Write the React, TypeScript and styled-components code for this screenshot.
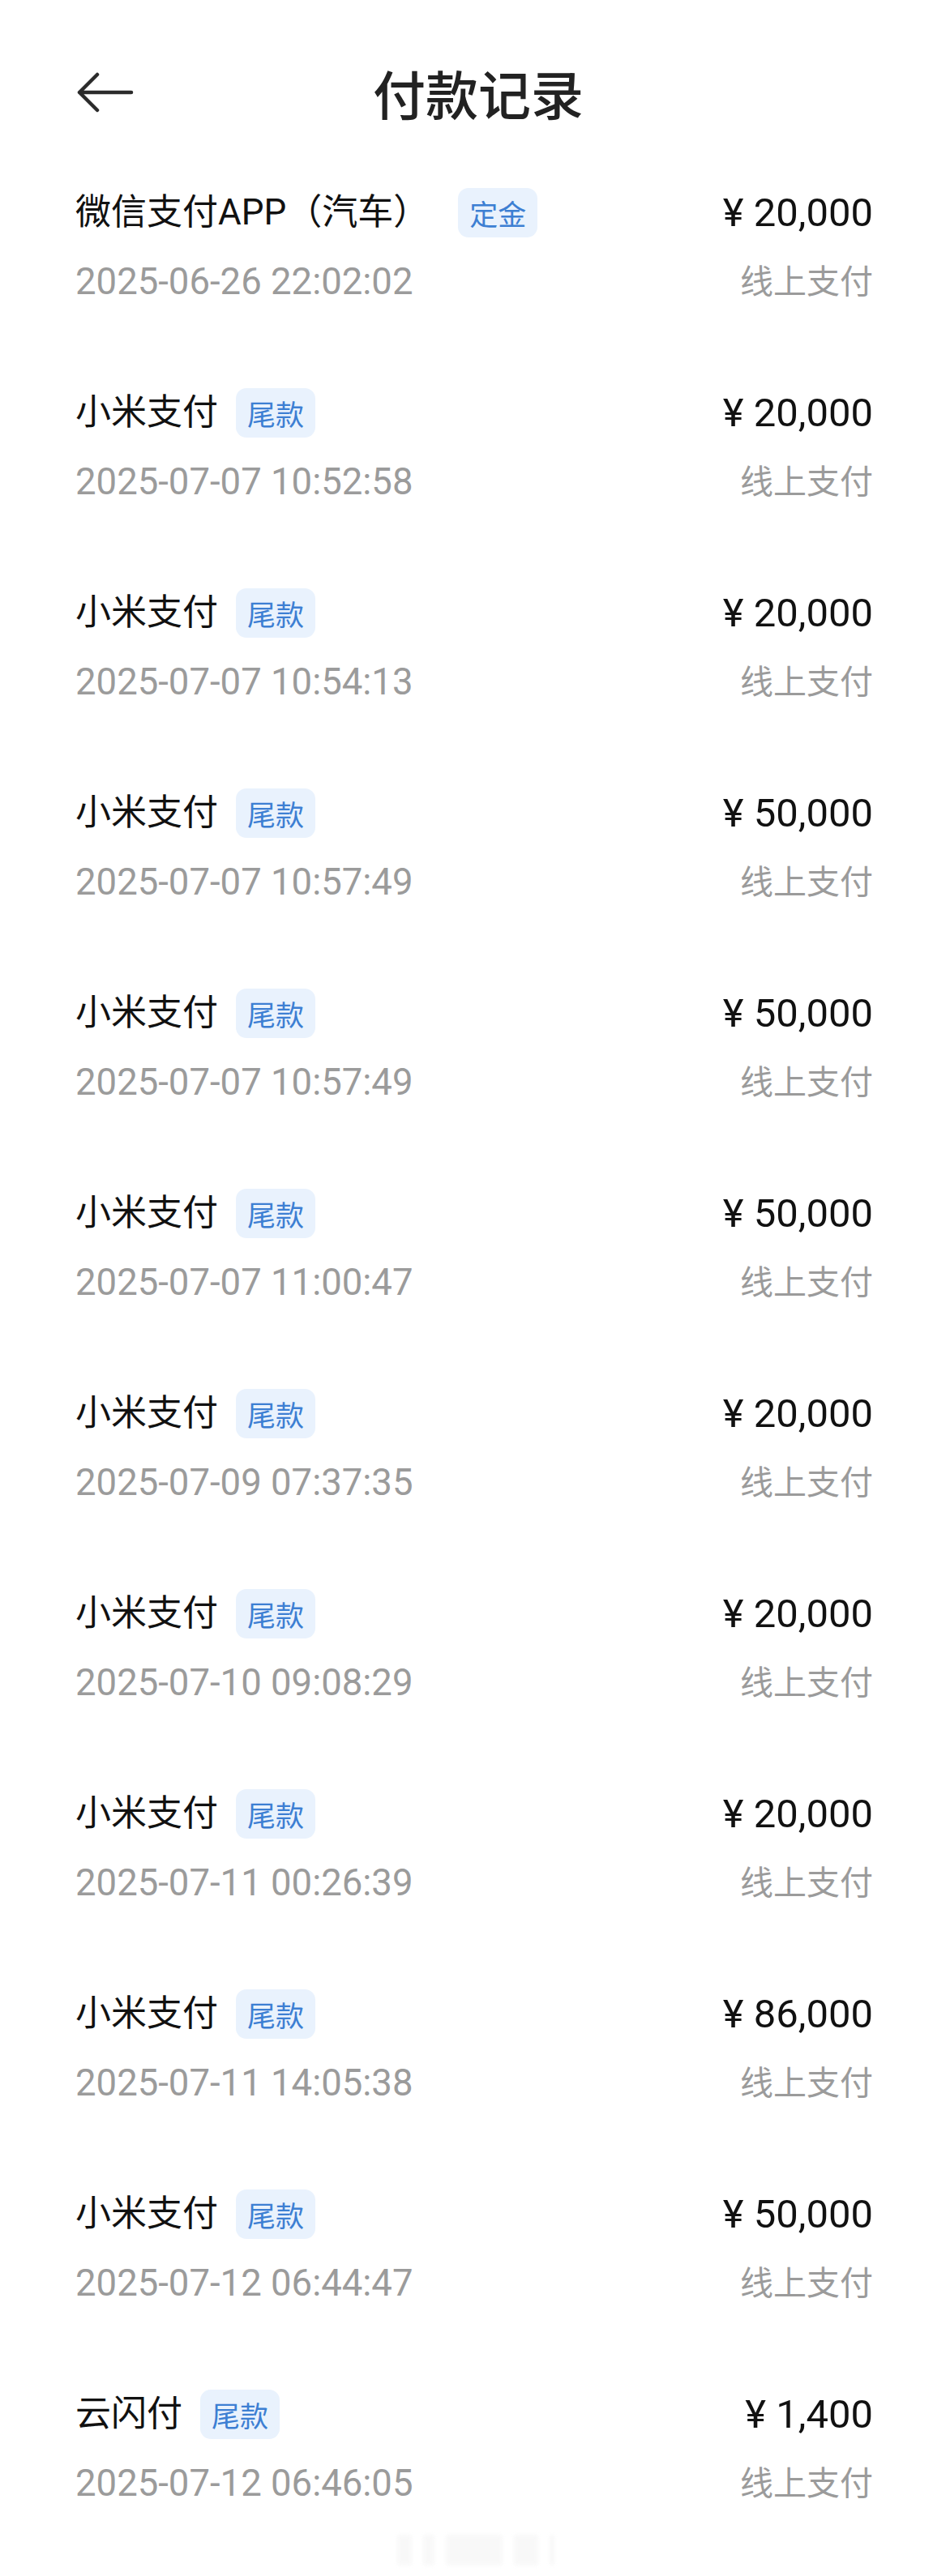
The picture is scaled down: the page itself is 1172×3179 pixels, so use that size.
import React from "react";
import styled, { createGlobalStyle } from "styled-components";

const GlobalStyle = createGlobalStyle`
  html, body {
    margin: 0;
    padding: 0;
    background: #ffffff;
  }
  body {
    font-family: Roboto, "Noto Sans CJK SC", "Noto Sans", sans-serif;
    -webkit-font-smoothing: antialiased;
  }
`;

const Page = styled.div`
  position: relative;
  width: 1172px;
  min-height: 3179px;
  background: #fff;
  overflow: hidden;
`;

const Header = styled.header`
  height: 228px;
  display: grid;
  grid-template-columns: 1fr auto 1fr;
  align-items: center;
  padding: 0 93px;
  box-sizing: border-box;
`;

const BackButton = styled.button`
  justify-self: start;
  display: flex;
  align-items: center;
  justify-content: center;
  width: 72px;
  height: 50px;
  padding: 0;
  margin: 0 0 0 1px;
  border: none;
  background: transparent;
  cursor: pointer;
  color: #2b2b2b;
`;

const Title = styled.h1`
  margin: 0 0 0 8px;
  font-family: "Noto Sans CJK SC", sans-serif;
  font-size: 65px;
  line-height: 1;
  font-weight: 500;
  color: #222;
  letter-spacing: 0;
`;

const List = styled.ul`
  list-style: none;
  margin: 0;
  padding: 0 95px 0 93px;
`;

const Row = styled.li`
  height: 247px;
  display: grid;
  grid-template-columns: 1fr auto;
  grid-template-rows: 68px 50px;
  row-gap: 27px;
  align-items: center;
`;

const NameLine = styled.div`
  display: flex;
  align-items: center;
  gap: 22px;
  min-width: 0;
`;

const Name = styled.span`
  font-family: Roboto, "Noto Sans CJK SC", sans-serif;
  font-size: 44px;
  line-height: 1;
  color: #111;
  white-space: nowrap;
`;

const Badge = styled.span<{ $wide?: boolean }>`
  display: inline-flex;
  align-items: center;
  justify-content: center;
  height: 61px;
  padding: 0 14px;
  border-radius: 13px;
  background: #e9f2fd;
  color: #3d7fd3;
  font-family: "Noto Sans CJK SC", sans-serif;
  font-size: 35px;
  line-height: 1;
  margin-left: ${(p) => (p.$wide ? "14px" : "0")};
`;

const Amount = styled.span`
  justify-self: end;
  font-family: Roboto, "Noto Sans CJK SC", sans-serif;
  font-size: 49px;
  line-height: 1;
  color: #111;
  white-space: nowrap;
`;

const DateText = styled.span`
  font-family: Roboto, "Noto Sans CJK SC", sans-serif;
  font-size: 45.5px;
  line-height: 1;
  color: #9b9b9b;
  white-space: nowrap;
`;

const Method = styled.span`
  justify-self: end;
  margin-bottom: 8px;
  font-family: "Noto Sans CJK SC", sans-serif;
  font-size: 41px;
  line-height: 1;
  color: #9b9b9b;
  white-space: nowrap;
`;

const Watermark = styled.div`
  position: absolute;
  left: 490px;
  top: 3128px;
  display: flex;
  gap: 14px;
  align-items: stretch;
  height: 38px;
  filter: blur(2px);
  opacity: 0.13;
`;

const WatermarkBar = styled.span<{ $w: number }>`
  display: block;
  width: ${(p) => p.$w}px;
  background: #cfcfcf;
  border-radius: 3px;
`;

type Payment = {
  name: string;
  tag: string;
  amount: string;
  time: string;
};

const payments: Payment[] = [
  { name: "微信支付APP（汽车）", tag: "定金", amount: "¥ 20,000", time: "2025-06-26 22:02:02" },
  { name: "小米支付", tag: "尾款", amount: "¥ 20,000", time: "2025-07-07 10:52:58" },
  { name: "小米支付", tag: "尾款", amount: "¥ 20,000", time: "2025-07-07 10:54:13" },
  { name: "小米支付", tag: "尾款", amount: "¥ 50,000", time: "2025-07-07 10:57:49" },
  { name: "小米支付", tag: "尾款", amount: "¥ 50,000", time: "2025-07-07 10:57:49" },
  { name: "小米支付", tag: "尾款", amount: "¥ 50,000", time: "2025-07-07 11:00:47" },
  { name: "小米支付", tag: "尾款", amount: "¥ 20,000", time: "2025-07-09 07:37:35" },
  { name: "小米支付", tag: "尾款", amount: "¥ 20,000", time: "2025-07-10 09:08:29" },
  { name: "小米支付", tag: "尾款", amount: "¥ 20,000", time: "2025-07-11 00:26:39" },
  { name: "小米支付", tag: "尾款", amount: "¥ 86,000", time: "2025-07-11 14:05:38" },
  { name: "小米支付", tag: "尾款", amount: "¥ 50,000", time: "2025-07-12 06:44:47" },
  { name: "云闪付", tag: "尾款", amount: "¥ 1,400", time: "2025-07-12 06:46:05" },
];

const BackArrow = () => (
  <svg width="72" height="50" viewBox="0 0 72 50" fill="none">
    <path
      d="M68 25H4M4 25L26 3M4 25L26 47"
      stroke="currentColor"
      strokeWidth="4.5"
      strokeLinecap="round"
      strokeLinejoin="round"
    />
  </svg>
);

export default function App() {
  return (
    <Page>
      <GlobalStyle />
      <Header>
        <BackButton aria-label="返回">
          <BackArrow />
        </BackButton>
        <Title>付款记录</Title>
        <span />
      </Header>
      <List>
        {payments.map((p, i) => (
          <Row key={i}>
            <NameLine>
              <Name>{p.name}</Name>
              <Badge $wide={i === 0}>{p.tag}</Badge>
            </NameLine>
            <Amount>{p.amount}</Amount>
            <DateText>{p.time}</DateText>
            <Method>线上支付</Method>
          </Row>
        ))}
      </List>
      <Watermark aria-hidden>
        <WatermarkBar $w={18} />
        <WatermarkBar $w={14} />
        <WatermarkBar $w={70} />
        <WatermarkBar $w={30} />
        <WatermarkBar $w={6} />
      </Watermark>
    </Page>
  );
}
